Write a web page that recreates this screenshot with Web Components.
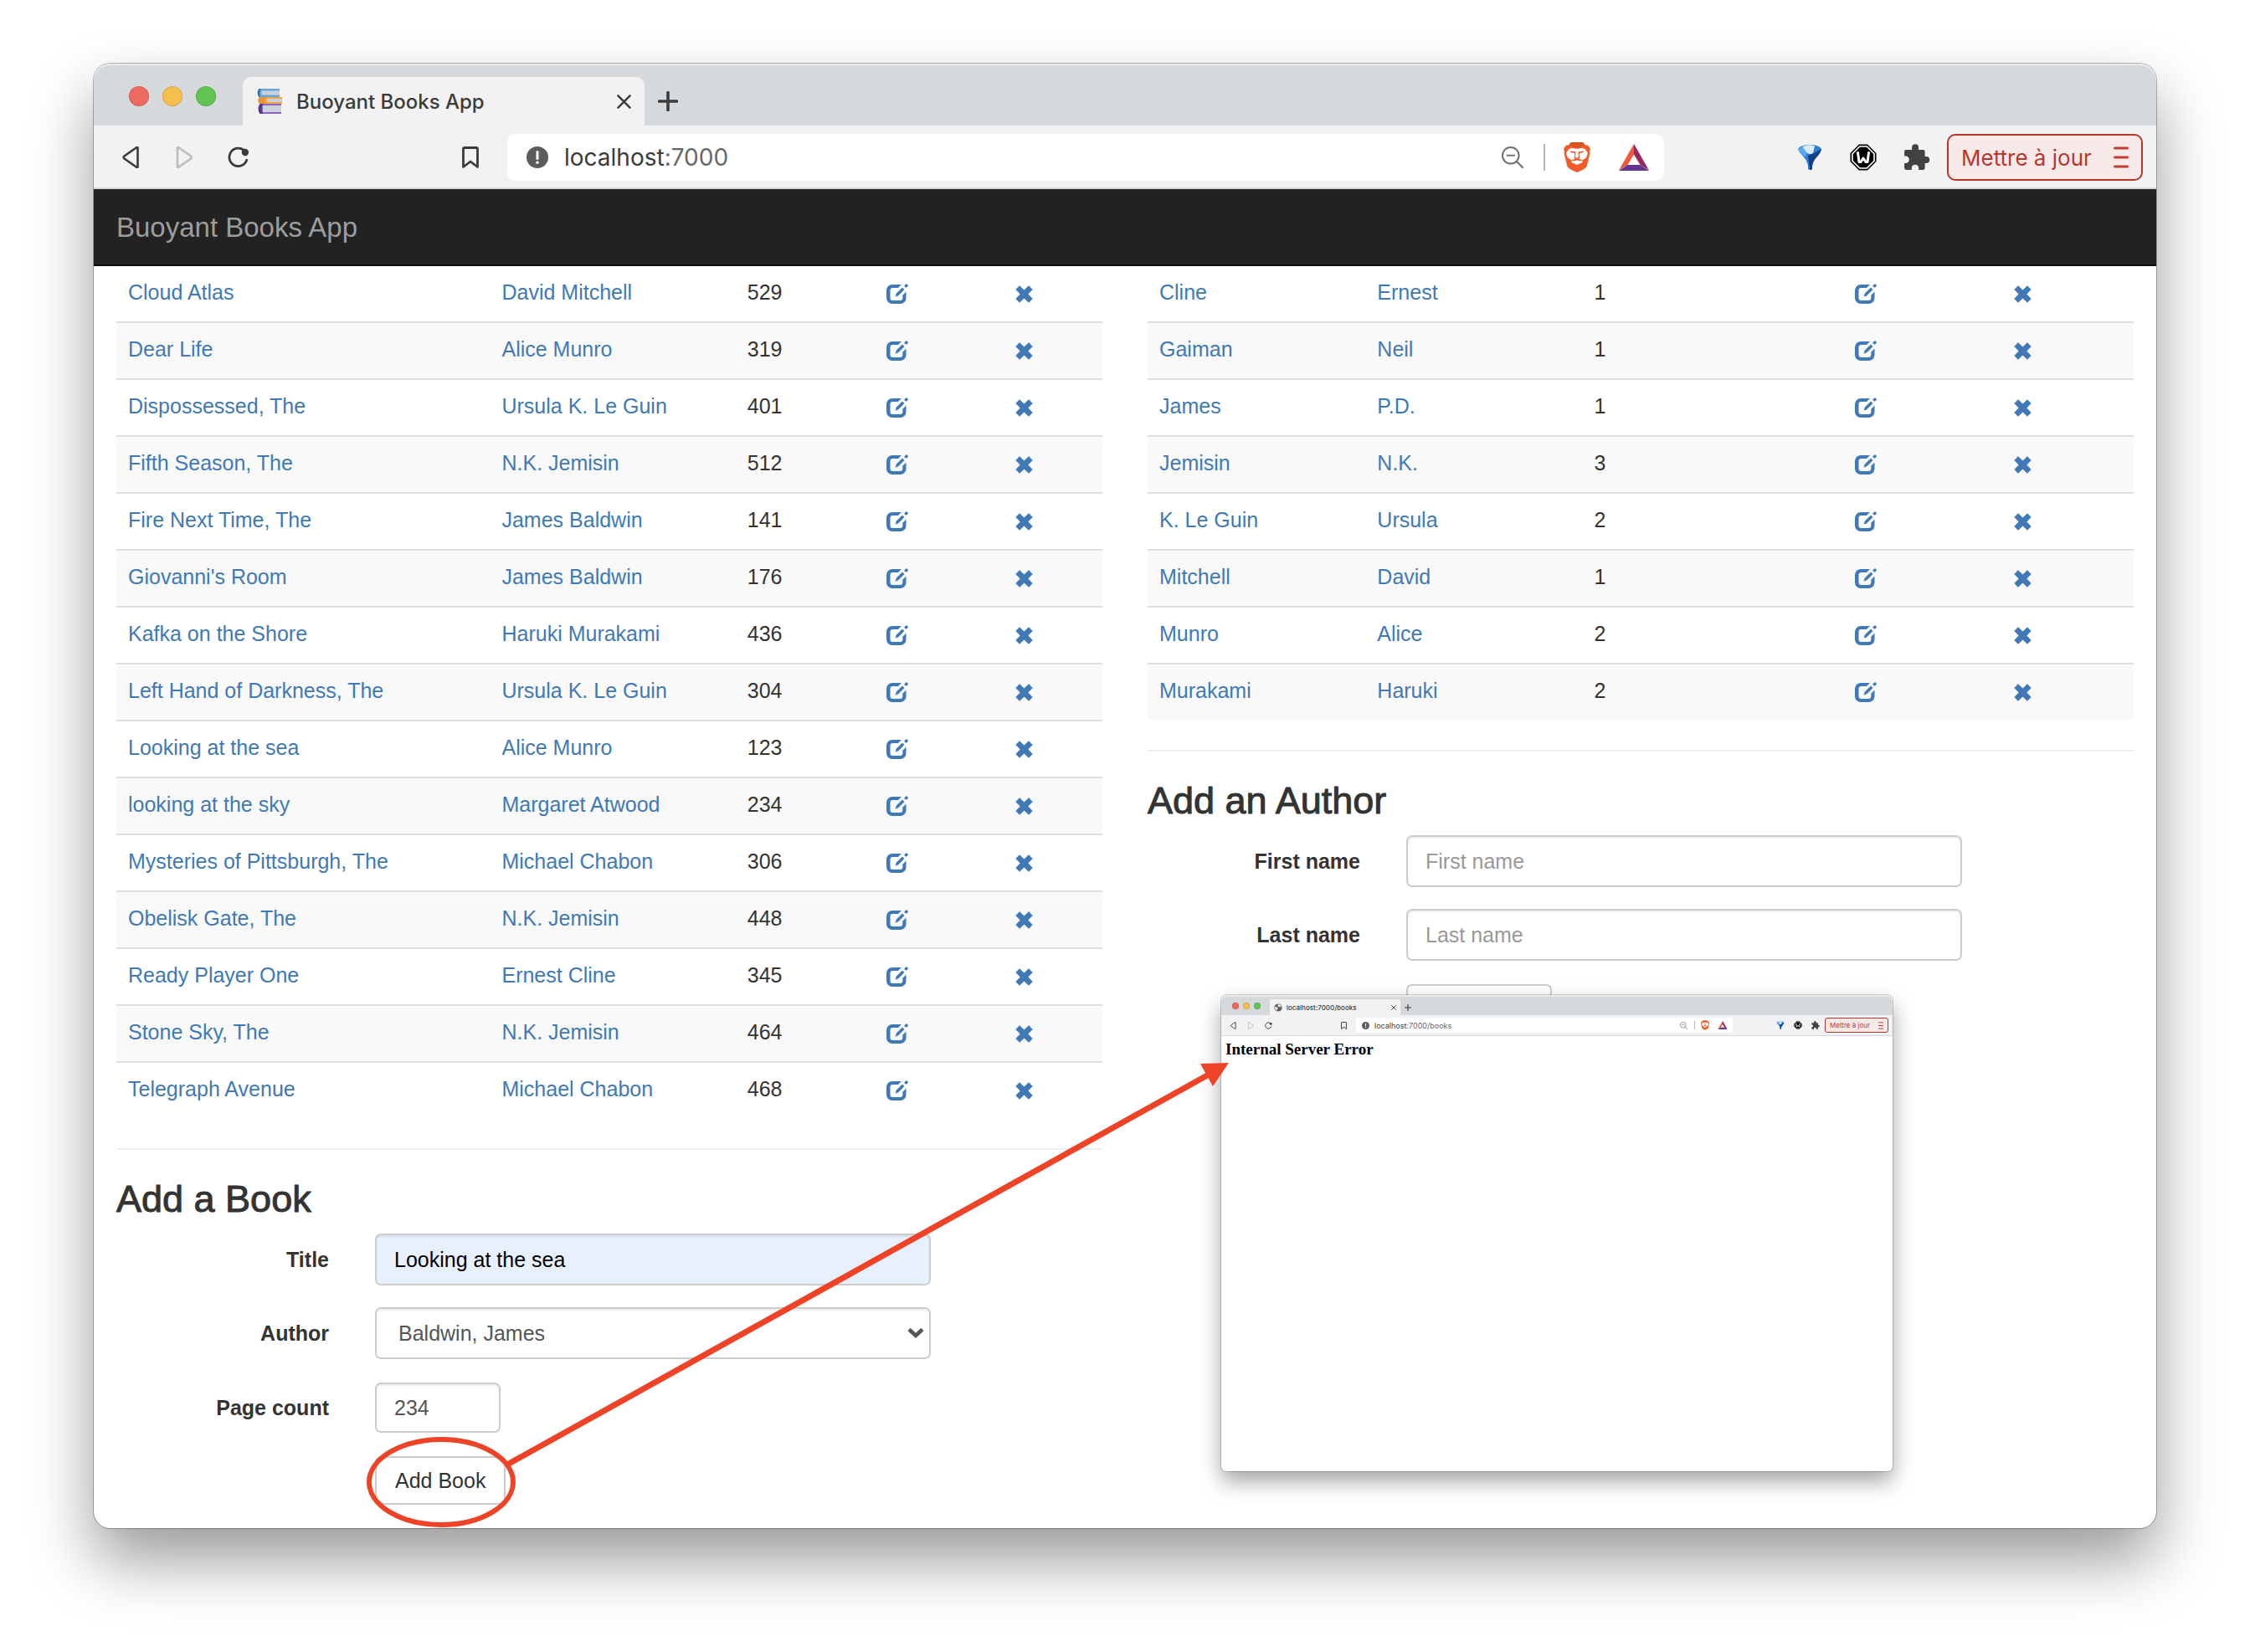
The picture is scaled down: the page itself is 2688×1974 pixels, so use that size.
<!DOCTYPE html>
<html lang="en">
<head>
<meta charset="utf-8">
<title>Buoyant Books App</title>
<style>
  html, body { margin: 0; background: #fff; }
  body { font-family: "Liberation Sans", Arial, sans-serif; color: #333; }
</style>
</head>
<body>
<books-scene></books-scene>

<script>
const ICONS = {
  books: ['0 0 32 32', `
    <path d="M4 1h24v9H4z" fill="#c9d2d9"/><path d="M3.500 1H28v2.500H6.500v5H28V11H3.500Q0 6 3.500 1z" fill="#67a5dd"/><path d="M3.500 1h2Q3 6 5 11H3.500Q0 6 3.500 1z" fill="#2f6ca3"/>
    <path d="M12 12h19v6H12z" fill="#c9d2d9"/><path d="M4 11h27v2H13v4h18v2H4q-3-4 0-8z" fill="#f2a541"/><path d="M4 11h7q-2 4 0 8H4q-3-4 0-8z" fill="#e8923a"/>
    <path d="M8 20h22v9H8z" fill="#c9d2d9"/><path d="M5 19h25v2H8v8h22v2H5q-4-6 0-12z" fill="#8d63c4"/><path d="M4.500 19H8q-3 6 0 12H4.500q-4-6 0-12z" fill="#553788"/>`],
  globe: ['0 0 24 24', `<circle cx="12" cy="12" r="11" fill="#5a5d60"/><path d="M3 9c4 0 4 3 7 3s1 4-1 5 0 3 0 4C5 20 2 16 3 9zM11 3c5-1 9 2 10 6-2 3-4 0-6 1s-3-1-4-2 1-2 0-5z" fill="#f2f2f2"/>`],
  close: ['0 0 18 18', `<path d="M1.500 1.500l15 15M16.500 1.500l-15 15" fill="none" stroke="#3b3b3b" stroke-width="2.600" stroke-linecap="round"/>`],
  plus: ['0 0 24 24', `<path d="M12 1.500v21M1.500 12h21" fill="none" stroke="#3b3b3b" stroke-width="3.600" stroke-linecap="round"/>`],
  back: ['0 0 26 26', `<path d="M20.500 1.500v23q0 1-1 .5L4.500 14.500q-1.500-1.500 0-3L19.500 1q1-.5 1 .5z" fill="none" stroke="#3b3b3b" stroke-width="2.600" stroke-linejoin="round"/>`],
  forward: ['0 0 26 26', `<path d="M4 1.500v23q0 1 1 .5l15-10.500q1.500-1.500 0-3L5 1Q4 .5 4 1.500z" fill="none" stroke="#bcbcbc" stroke-width="2.600" stroke-linejoin="round"/>`],
  reload: ['0 0 28 28', `<path d="M21.500 5.500A11.500 11.500 0 1 0 24.500 17.500" fill="none" stroke="#3b3b3b" stroke-width="3" stroke-linecap="round"/><circle cx="22.500" cy="7.500" r="4.500" fill="#3b3b3b"/>`],
  bookmark: ['0 0 26 26', `<path d="M4.500 24.500V3q0-1.500 1.500-1.500h14q1.500 0 1.500 1.500v21.500L13 18z" fill="none" stroke="#3b3b3b" stroke-width="2.800" stroke-linejoin="round"/>`],
  info: ['0 0 26 26', `<circle cx="13" cy="13" r="13" fill="#5a5c5e"/><path d="M13 6.500v8" stroke="#fff" stroke-width="3" stroke-linecap="round"/><circle cx="13" cy="19.300" r="1.800" fill="#fff"/>`],
  zoomout: ['0 0 26 26', `<circle cx="10.800" cy="10.800" r="9.800" fill="none" stroke="#707274" stroke-width="2"/><path d="M6.500 10.800h8.600" stroke="#707274" stroke-width="2" stroke-linecap="round"/><path d="M18 18l7 7" stroke="#707274" stroke-width="2.200" stroke-linecap="round"/>`],
  brave: ['0 0 32 36', `
    <path d="M9 0h14l3 3.500 3 0L32 8l-1 3 .5 2.500L27.500 29q-1 2.500-11.500 7Q5.500 31.500 4.500 29L.5 13.500 1 11 0 8l3-4.500h3z" fill="#ef5b2a"/>
    <path d="M9 0h14l3 3.500-3.500 1L20 6h-8L9.500 4.500 6 3.500z" fill="#d9541f"/>
    <path d="M6.500 8L11 6.800l3 1h4l3-1 4.500 1.200 3.500 5-2 5.500-5 3.200.6 2.300L16 27 9.400 24l.6-2.300L5 18.500 3 13z" fill="#fff"/>
    <path d="M8 10.500l6 .8.600 1.500-.8 5 2.200 1 2.200-1-.8-5 .6-1.500 6-.8-.6 1.700-4.400.7-.3 1.400.8 4.700-3.500 2-3.500-2 .8-4.700-.3-1.400-4.400-.7zM9 21.200l7-1.700 7 1.700-3.500 1.300L16 21.200l-3.500 1.300z" fill="#ef5b2a"/>`],
  bat: ['0 0 36 32', `<path d="M18 0v12.500L10.500 25 0 31.500z" fill="#f0583a"/><path d="M18 0l18 31.500L25.500 25 18 12.500z" fill="#98295f"/><path d="M0 32l10.500-7h15L36 32z" fill="#5f3592"/>`],
  funnel: ['0 0 30 32', `<path d="M1 6q3-5 14-5t14 5q-1 5-5.500 9.500T18 26v4q-3 2-5 0v-4q-1-6-5.500-10.500T1 6z" fill="#2d7fd6"/><path d="M13 14l2 17q2 .3 3-1v-4q1-6 5.500-10.500T29 6L22 10z" fill="#123f86"/><path d="M6 3.500Q10 1 16 1.200l5 1L19 11q-3 2-7 0z" fill="#d8ecfd"/><path d="M1 6l5-2.500 6 7.500-3 5Q2 10 1 6z" fill="#5aaaf0"/>`],
  wlogo: ['0 0 32 32', `<path d="M11 .5h10L31.500 11v10L21 31.500H11L.5 21V11z" fill="#000"/><path d="M11.800 3h8.400L29 11.800v8.400L20.200 29h-8.400L3 20.200v-8.400z" fill="none" stroke="#fff" stroke-width="1.600"/><path d="M9.500 10.500L11 21.500h2l3-4.500 3 4.500h2l1.500-11" fill="none" stroke="#fff" stroke-width="3" stroke-linecap="round" stroke-linejoin="round"/>`],
  puzzle: ['0 0 30 30', `<path d="M3 6.500h6.500V4a3.700 3.700 0 0 1 7.400 0v2.500H22q2 0 2 2V14h1.500a3.800 3.800 0 0 1 0 7.600H24V27q0 2-2 2h-5v-2a3.900 3.900 0 0 0-7.800 0v2H3q-2 0-2-2v-5.500h1.500a3.900 3.900 0 0 0 0-7.800H1V8.500q0-2 2-2z" fill="#424242"/>`],
  menu: ['0 0 18 26', `<path d="M1.500 2h15M1.500 13h15M1.500 24h15" stroke="#c53a2f" stroke-width="3" stroke-linecap="round"/>`],
  edit: ['0 0 26 24', `<path fill="#4079b5" d="M18 1H7a7 7 0 0 0-7 7v9a7 7 0 0 0 7 7h9.500a7 7 0 0 0 7-7V9.500l-4.200 4.200V17a3 3 0 0 1-3 3H7.500a3 3 0 0 1-3-3V8a3 3 0 0 1 3-3H14zM10.500 15.800l1.400-4.200L19 4.400l2.500 2.500-7.200 7.300zM21 2.900L23.200.6a1 1 0 0 1 1.400 0l1 1a1 1 0 0 1 0 1.400l-1.900 1.800z"/>`],
  remove: ['0 0 21 21', `<path fill="#4079b5" d="M5 .3l5.500 5.300L16 .3 20.700 5l-5.400 5.500 5.400 5.500-4.700 4.700-5.500-5.300L5 20.700.3 16l5.400-5.500L.3 5z"/>`],
  chevron: ['0 0 20 14', `<path d="M2 2.500l8 7.500 8-7.500" fill="none" stroke="#555" stroke-width="4.500"/>`]
};

class UiIcon extends HTMLElement {
  connectedCallback() {
    const [box, body] = ICONS[this.getAttribute('name')];
    this.attachShadow({ mode: 'open' }).innerHTML = `
      <style>
        :host { display: block; flex: none; }
        svg { display: block; width: 100%; height: 100%; }
      </style>
      <svg viewBox="${box}" aria-hidden="true">${body}</svg>`;
  }
}
customElements.define('ui-icon', UiIcon);

class BrowserFrame extends HTMLElement {
  connectedCallback() {
    const a = n => this.getAttribute(n) || '';
    this.attachShadow({ mode: 'open' }).innerHTML = `
      <style>
        :host {
          --radius: 20px; --strip: 74px; --tab-h: 58px; --tab-w: 480px; --lights-w: 178px; --light: 24px;
          --light-gap: 16px; --light-pad: 42px; --light-drop: 4px; --corner: 10px; --tab-pad: 16px;
          --fav: 32px; --fav-gap: 16px; --x: 17px; --x-pad: 16px; --plus: 24px; --plus-gap: 16px;
          --slot: 64px; --ico: 26px; --lead: 13px; --mark-gap: 213px; --url-gap: 12px; --url-h: 56px;
          --url-pad: 23px; --url-text-gap: 19px; --tools-gap: 24px; --big: 36px; --wide: 36px; --rule: 2px;
          --after-url: 142px; --ext: 32px; --upd-gap: 4px; --upd-w: 234px; --upd-pad: 15px; --menu-w: 18px;
          --end: 16px; --tab-font: 24px; --url-font: 28px; --upd-font: 26px; --end-url: 18px; --tools-wide: 34px;
          --bar: 76px; --bar-drop: 2px;
          display: flex; flex-direction: column; border-radius: var(--radius); background: #fff;
          font-family: Inter, "Liberation Sans", sans-serif; color: #3b3b3b;
          box-shadow: 0 0 0 1px rgba(0,0,0,.28), 0 38px 76px rgba(0,0,0,.4);
        }
        :host([compact]) {
          --radius: 6px; --strip: 24px; --tab-h: 19px; --tab-w: 156px; --lights-w: 58px; --light: 8px;
          --light-gap: 5px; --light-pad: 13px; --light-drop: 2px; --corner: 3px; --tab-pad: 5px;
          --fav: 10px; --fav-gap: 5px; --x: 6px; --x-pad: 5px; --plus: 8px; --plus-gap: 5px;
          --slot: 21px; --ico: 9px; --lead: 4px; --mark-gap: 69px; --url-gap: 4px; --url-h: 18px;
          --url-pad: 7px; --url-text-gap: 6px; --tools-gap: 8px; --big: 12px; --wide: 12px; --rule: 1px;
          --after-url: 46px; --ext: 10px; --upd-gap: 1px; --upd-w: 76px; --upd-pad: 5px; --menu-w: 6px;
          --end: 5px; --tab-font: 8px; --url-font: 9px; --upd-font: 8px; --end-url: 6px; --tools-wide: 10px;
          --bar: 25px; --bar-drop: 0px;
          box-shadow: 0 0 0 1px rgba(0,0,0,.16), 0 12px 26px rgba(0,0,0,.36);
        }
        button { border: 0; padding: 0; margin: 0; background: none; font: inherit; color: inherit; display: flex; align-items: center; justify-content: center; }
        .strip { display: flex; align-items: flex-end; height: var(--strip); background: #d5d9dc; border-radius: var(--radius) var(--radius) 0 0; box-shadow: inset 0 2px 0 rgba(255,255,255,.45); }
        .lights { box-sizing: border-box; width: var(--lights-w); height: 100%; padding: var(--light-drop) 0 0 var(--light-pad); display: flex; align-items: center; gap: var(--light-gap); }
        .lights i { width: var(--light); height: var(--light); border-radius: 50%; box-shadow: inset 0 0 0 1px rgba(0,0,0,.12); }
        .tab { box-sizing: border-box; width: var(--tab-w); height: var(--tab-h); padding: 0 var(--x-pad) 0 var(--tab-pad); display: flex; align-items: center; background: #f2f2f2; border-radius: var(--corner) var(--corner) 0 0; font-size: var(--tab-font); font-weight: 500; }
        .tab span { flex: 1; margin-left: var(--fav-gap); white-space: nowrap; }
        .fav { width: var(--fav); height: var(--fav); }
        .x ui-icon { width: var(--x); height: var(--x); }
        .new { height: var(--tab-h); margin-left: var(--plus-gap); }
        .new ui-icon { width: var(--plus); height: var(--plus); }
        .bar { box-sizing: border-box; display: flex; align-items: center; height: var(--bar); padding: var(--bar-drop) var(--end) 0 var(--lead); background: #f2f2f2; border-bottom: var(--rule) solid #d5d9dc; }
        .nav { width: var(--slot); height: var(--url-h); }
        .nav ui-icon { width: var(--ico); height: var(--ico); }
        .ext ui-icon { width: var(--ext); height: var(--ext); }
        .mark { margin: 0 var(--url-gap) 0 var(--mark-gap); }
        .url { flex: 1; box-sizing: border-box; height: var(--url-h); padding: 0 var(--end-url) 0 var(--url-pad); display: flex; align-items: center; background: #fff; border-radius: var(--corner); font-size: var(--url-font); }
        .url > ui-icon { width: var(--ico); height: var(--ico); }
        .addr { flex: 1; margin-left: var(--url-text-gap); white-space: nowrap; color: #66686a; }
        .addr b { font-weight: 400; color: #3b3b3b; }
        .sep { width: var(--rule); height: var(--ext); background: #b4b4b4; margin: 0 calc(var(--tools-gap) - var(--rule)) 0 var(--tools-gap); }
        .url .brave { width: var(--ext); height: var(--big); margin-right: var(--tools-wide); }
        .url .bat { width: var(--wide); height: var(--ext); }
        .exts { display: flex; margin-left: var(--after-url); }
        .update { box-sizing: border-box; width: var(--upd-w); height: var(--url-h); margin-left: var(--upd-gap); padding: 0 var(--upd-pad); justify-content: space-between; border: var(--rule) solid #b8362b; border-radius: var(--corner); background: #f8e9e9; color: #b8362b; font-size: var(--upd-font); white-space: nowrap; }
        .update ui-icon { width: var(--menu-w); height: var(--ico); }
        .view { flex: 1; }
      </style>
      <div class="strip">
        <div class="lights"><i style="background:#ed6a5e"></i><i style="background:#f5bf4f"></i><i style="background:#61c554"></i></div>
        <div class="tab"><ui-icon class="fav" name="${a('favicon')}"></ui-icon><span>${a('tab')}</span>
          <button class="x" aria-label="Close tab"><ui-icon name="close"></ui-icon></button></div>
        <button class="new" aria-label="New tab"><ui-icon name="plus"></ui-icon></button>
      </div>
      <div class="bar">
        <button class="nav" aria-label="Back"><ui-icon name="back"></ui-icon></button>
        <button class="nav" aria-label="Forward"><ui-icon name="forward"></ui-icon></button>
        <button class="nav" aria-label="Reload"><ui-icon name="reload"></ui-icon></button>
        <button class="nav mark" aria-label="Bookmark"><ui-icon name="bookmark"></ui-icon></button>
        <div class="url"><ui-icon name="info"></ui-icon><span class="addr"><b>localhost</b>${a('path')}</span>
          <ui-icon name="zoomout"></ui-icon><div class="sep"></div>
          <ui-icon class="brave" name="brave"></ui-icon><ui-icon class="bat" name="bat"></ui-icon></div>
        <div class="exts">
          <button class="nav ext" aria-label="Filter extension"><ui-icon name="funnel"></ui-icon></button>
          <button class="nav ext" aria-label="W extension"><ui-icon name="wlogo"></ui-icon></button>
          <button class="nav ext" aria-label="Extensions"><ui-icon name="puzzle"></ui-icon></button>
        </div>
        <button class="update">Mettre à jour<ui-icon name="menu"></ui-icon></button>
      </div>
      <div class="view"><slot></slot></div>`;
  }
}
customElements.define('browser-frame', BrowserFrame);

class RecordTable extends HTMLElement {
  connectedCallback() {
    const rows = this.getAttribute('rows').split('|').map(r => r.split(';'));
    const cols = this.getAttribute('cols').split(' ');
    this.attachShadow({ mode: 'open' }).innerHTML = `
      <style>
        :host { display: block; margin-bottom: 36px; }
        table { width: 100%; table-layout: fixed; border-spacing: 0; font-size: 25px; line-height: 36px; color: #333; }
        td { padding: 13px 14px 17px; border-top: 2px solid #ddd; white-space: nowrap; vertical-align: top; }
        tr:first-child td { border-top: 0; }
        tr:nth-child(even) td { background: #f9f9f9; }
        a { color: #4079b5; text-decoration: none; }
        a.act { display: flex; align-items: center; height: 36px; padding-top: 4px; box-sizing: border-box; }
        .edit { width: 26px; height: 24px; margin-left: 1px; }
        .remove { width: 21px; height: 21px; margin-left: 2px; }
      </style>
      <table>
        <colgroup>${cols.map(c => `<col style="width:${c}%">`).join('')}</colgroup>
        <tbody>${rows.map(([a, b, n]) => `<tr>
          <td><a href="#">${a}</a></td><td><a href="#">${b}</a></td><td>${n}</td>
          <td><a class="act" href="#" aria-label="Edit"><ui-icon class="edit" name="edit"></ui-icon></a></td>
          <td><a class="act" href="#" aria-label="Delete"><ui-icon class="remove" name="remove"></ui-icon></a></td>
        </tr>`).join('')}</tbody>
      </table>`;
  }
}
customElements.define('record-table', RecordTable);

const FORM_CSS = `
  :host { display: block; border-top: 2px solid #eee; }
  h3 { margin: 33px 0 15px; font-size: 45px; line-height: 52px; font-weight: 400; -webkit-text-stroke: 1px #333; color: #333; }
  .group { display: flex; margin: 0 -27px; font-size: 25px; }
  .group + .group { margin-top: 26px; }
  .group + .group.small { margin-top: 28px; }
  label, .pad { box-sizing: border-box; flex: none; width: 25%; padding: 0 27px; text-align: right; font-weight: 700; line-height: 62px; white-space: nowrap; color: #333; }
  .small label { line-height: 60px; }
  .field { box-sizing: border-box; flex: none; width: 58.3333%; padding: 0 27px 0 28px; position: relative; }
  input, select { box-sizing: border-box; display: block; width: 100%; height: 62px; margin: 0; padding: 0 21px; border: 2px solid #ccc; border-radius: 7px; background: #fff; box-shadow: inset 0 2px 2px rgba(0,0,0,.075); color: #555; font: inherit; appearance: none; }
  select { padding: 0 26px; }
  input::placeholder { color: #999; opacity: 1; }
  input.filled { background: #e8f0fe; color: #000; }
  input.count { width: 150px; height: 60px; }
  ui-icon { position: absolute; right: 35px; top: 24px; width: 20px; height: 14px; pointer-events: none; }
  button { display: block; height: 58px; margin: 0; padding: 0 22px; border: 2px solid #ccc; border-radius: 7px; background: #fff; color: #333; font: inherit; white-space: nowrap; }`;

class BookForm extends HTMLElement {
  connectedCallback() {
    this.attachShadow({ mode: 'open' }).innerHTML = `
      <style>${FORM_CSS}</style>
      <h3>Add a Book</h3>
      <form>
        <div class="group"><label for="title">Title</label><div class="field"><input class="filled" id="title" type="text" value="Looking at the sea"></div></div>
        <div class="group"><label for="author">Author</label><div class="field"><select id="author"><option>Baldwin, James</option></select><ui-icon name="chevron"></ui-icon></div></div>
        <div class="group small"><label for="pages">Page count</label><div class="field"><input class="count" id="pages" type="text" value="234"></div></div>
        <div class="group small"><div class="pad"></div><div class="field"><button type="button">Add Book</button></div></div>
      </form>`;
  }
}
customElements.define('book-form', BookForm);

class AuthorForm extends HTMLElement {
  connectedCallback() {
    this.attachShadow({ mode: 'open' }).innerHTML = `
      <style>${FORM_CSS}
        button { width: 174px; }
      </style>
      <h3>Add an Author</h3>
      <form>
        <div class="group"><label for="first">First name</label><div class="field"><input id="first" type="text" placeholder="First name"></div></div>
        <div class="group"><label for="last">Last name</label><div class="field"><input id="last" type="text" placeholder="Last name"></div></div>
        <div class="group small"><div class="pad"></div><div class="field"><button type="button" aria-label="Add Author"></button></div></div>
      </form>`;
  }
}
customElements.define('author-form', AuthorForm);

class ErrorPage extends HTMLElement {
  connectedCallback() {
    this.attachShadow({ mode: 'open' }).innerHTML = `
      <style>
        :host { display: block; padding: 5px; }
        h1 { margin: 0; font: 700 19px/22px "Liberation Serif", "Times New Roman", serif; color: #000; }
      </style>
      <h1>Internal Server Error</h1>`;
  }
}
customElements.define('error-page', ErrorPage);

class BooksPage extends HTMLElement {
  connectedCallback() {
    this.attachShadow({ mode: 'open' }).innerHTML = `
      <style>
        :host { display: block; font-family: "Liberation Sans", Arial, sans-serif; }
        header { box-sizing: border-box; height: 92px; padding: 2px 27px 0; display: flex; align-items: center; background: #222; border-bottom: 2px solid #090909; }
        header a { font-size: 33px; line-height: 36px; color: #9d9d9d; text-decoration: none; }
        main { display: grid; grid-template-columns: 1fr 1fr; gap: 54px; padding: 0 27px 28px; }
        section { min-width: 0; }
      </style>
      <header><a href="#">Buoyant Books App</a></header>
      <main>
        <section>
          <record-table cols="37.9 24.9 14 13 10.2" rows="Cloud Atlas;David Mitchell;529|Dear Life;Alice Munro;319|Dispossessed, The;Ursula K. Le Guin;401|Fifth Season, The;N.K. Jemisin;512|Fire Next Time, The;James Baldwin;141|Giovanni's Room;James Baldwin;176|Kafka on the Shore;Haruki Murakami;436|Left Hand of Darkness, The;Ursula K. Le Guin;304|Looking at the sea;Alice Munro;123|looking at the sky;Margaret Atwood;234|Mysteries of Pittsburgh, The;Michael Chabon;306|Obelisk Gate, The;N.K. Jemisin;448|Ready Player One;Ernest Cline;345|Stone Sky, The;N.K. Jemisin;464|Telegraph Avenue;Michael Chabon;468"></record-table>
          <book-form></book-form>
        </section>
        <section>
          <record-table cols="22.1 22 26.4 16 13.5" rows="Cline;Ernest;1|Gaiman;Neil;1|James;P.D.;1|Jemisin;N.K.;3|K. Le Guin;Ursula;2|Mitchell;David;1|Munro;Alice;2|Murakami;Haruki;2"></record-table>
          <author-form></author-form>
        </section>
      </main>`;
  }
}
customElements.define('books-page', BooksPage);

class BooksScene extends HTMLElement {
  connectedCallback() {
    this.attachShadow({ mode: 'open' }).innerHTML = `
      <style>
        :host { display: block; padding: 76px 112px 148px; overflow: hidden; }
        .stage { position: relative; }
        .popup { position: absolute; left: 1347px; top: 1113px; width: 802px; height: 569px; }
        .marks { position: absolute; left: 0; top: 0; width: 100%; height: 100%; pointer-events: none; }
      </style>
      <div class="stage">
        <browser-frame favicon="books" tab="Buoyant Books App" path=":7000"><books-page></books-page></browser-frame>
        <browser-frame class="popup" compact favicon="globe" tab="localhost:7000/books" path=":7000/books"><error-page></error-page></browser-frame>
        <svg class="marks" viewBox="0 0 2464 1750" preserveAspectRatio="xMinYMin" aria-hidden="true">
          <ellipse cx="415" cy="1695" rx="86" ry="51" fill="none" stroke="#ee4327" stroke-width="6"/>
          <path d="M494 1674L1332 1208" stroke="#ee4327" stroke-width="7"/>
          <path d="M1356 1194L1322 1195 1337 1222z" fill="#ee4327"/>
        </svg>
      </div>`;
  }
}
customElements.define('books-scene', BooksScene);
</script>
</body>
</html>
